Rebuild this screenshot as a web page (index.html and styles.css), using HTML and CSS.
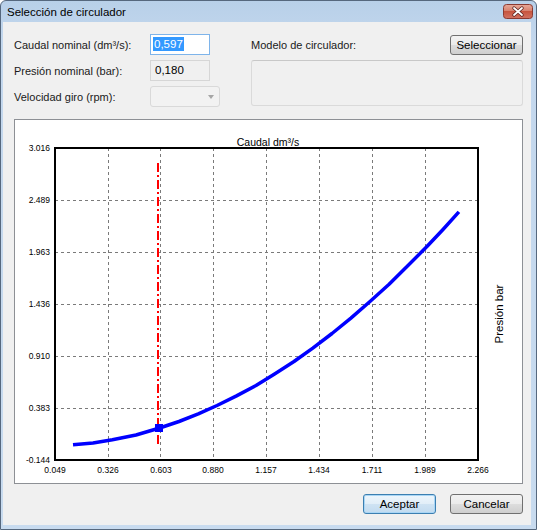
FILE: index.html
```html
<!doctype html>
<html lang="es">
<head>
	<meta charset="utf-8" />
	<title>
		Selección de circulador
	</title>

	<link rel="stylesheet" href="styles.css">
</head>
<body>

	<!-- BEGIN: Window. -->
	<section class="window">
		<header class="window__title-bar">

			<span class="window__title">Selección de circulador</span>

			<button class="window__close" type="button" aria-label="Cerrar">
				<svg width="30" height="15" viewBox="0 0 30 15">
					<defs>
						<linearGradient id="close-fill" x1="0" y1="0" x2="0" y2="1">
							<stop offset="0" stop-color="#e8a99a" />
							<stop offset="0.45" stop-color="#d7826f" />
							<stop offset="0.5" stop-color="#c7553f" />
							<stop offset="1" stop-color="#d27262" />
						</linearGradient>
					</defs>
					<rect x="0.5" y="0.5" width="29" height="14" rx="3" fill="url(#close-fill)" stroke="#8a3a32" />
					<path d="M11 4 L19 11 M19 4 L11 11" stroke="#5a2320" stroke-width="3.4" stroke-linecap="round" />
					<path d="M11 4 L19 11 M19 4 L11 11" stroke="#ffffff" stroke-width="1.8" stroke-linecap="round" />
				</svg>
			</button>

		</header>

		<div class="window__client">

			<!-- BEGIN: Form. -->
			<div class="form">
				<div class="form__left">

					<label class="form__label">Caudal nominal (dm³/s):</label>
					<div class="field field--focused">
						<span class="field__selection">0,597</span>
					</div>

					<label class="form__label">Presión nominal (bar):</label>
					<div class="field field--readonly">0,180</div>

					<label class="form__label">Velocidad giro (rpm):</label>
					<div class="combo">
						<span class="combo__arrow"></span>
					</div>

				</div>
				<div class="form__right">

					<div class="form__model-row">
						<span class="form__label">Modelo de circulador:</span>
						<button class="button" type="button">Seleccionar</button>
					</div>

					<div class="model-box"></div>

				</div>
			</div>
			<!-- END: Form. -->

			<!-- BEGIN: Chart. -->
			<div class="chart">
				<svg class="chart__svg" width="507" height="363" viewBox="15 120 507 363">

					<text class="chart__title" x="268" y="146">Caudal dm³/s</text>

					<g class="chart__grid">
						<line x1="108.5" y1="148" x2="108.5" y2="460" />
						<line x1="160.5" y1="148" x2="160.5" y2="460" />
						<line x1="213.5" y1="148" x2="213.5" y2="460" />
						<line x1="266.5" y1="148" x2="266.5" y2="460" />
						<line x1="319.5" y1="148" x2="319.5" y2="460" />
						<line x1="372.5" y1="148" x2="372.5" y2="460" />
						<line x1="425.5" y1="148" x2="425.5" y2="460" />
						<line x1="55" y1="200.5" x2="478" y2="200.5" />
						<line x1="55" y1="252.5" x2="478" y2="252.5" />
						<line x1="55" y1="304.5" x2="478" y2="304.5" />
						<line x1="55" y1="356.5" x2="478" y2="356.5" />
						<line x1="55" y1="408.5" x2="478" y2="408.5" />
					</g>

					<rect class="chart__frame" x="55" y="148" width="423" height="312" />

					<g class="chart__y-labels">
						<text x="50" y="151">3.016</text>
						<text x="50" y="203">2.489</text>
						<text x="50" y="255">1.963</text>
						<text x="50" y="307">1.436</text>
						<text x="50" y="359">0.910</text>
						<text x="50" y="411">0.383</text>
						<text x="50" y="463">-0.144</text>
					</g>

					<g class="chart__x-labels">
						<text x="55" y="473">0.049</text>
						<text x="108" y="473">0.326</text>
						<text x="161" y="473">0.603</text>
						<text x="213" y="473">0.880</text>
						<text x="266" y="473">1.157</text>
						<text x="319" y="473">1.434</text>
						<text x="372" y="473">1.711</text>
						<text x="425" y="473">1.989</text>
						<text x="478" y="473">2.266</text>
					</g>

					<line class="chart__marker-line" x1="158" y1="163" x2="158" y2="447" />

					<polyline class="chart__curve" points="73,444.8 93,443 112.4,439.7 136,435 159.6,428 179,421.5 198.3,413.9 217,405.5 236.5,395.9 256,385.5 274.6,374 294,361.5 312.8,348.1 332,333.5 350.9,318.1 370,301.5 389.1,284.2 408,265.5 427.2,246.3 443,229.5 458.9,211.9" />

					<rect class="chart__point" x="155" y="424" width="8" height="8" />

					<text class="chart__axis-name" x="499" y="314" transform="rotate( -90 499 314 )">Presión bar</text>

				</svg>
			</div>
			<!-- END: Chart. -->

			<div class="actions">
				<button class="button button--default" type="button">Aceptar</button>
				<button class="button" type="button">Cancelar</button>
			</div>

		</div>
	</section>
	<!-- END: Window. -->

</body>
</html>
```

FILE: styles.css
```css
html {
	box-sizing: border-box ;
}

*, *:before, *:after {
	box-sizing: inherit ;
}

body {
	color: #000000 ;
	font-family: "Liberation Sans", Arial, sans-serif ;
	font-size: 11px ;
	margin: 0px 0px 0px 0px ;
}

button {
	font-family: inherit ;
	font-size: inherit ;
}

/* BEGIN: Window frame. */
.window {
	background: linear-gradient( #b8d0e9, #c3d7ed 40px, #c8dbef ) ;
	border: 1px solid #56687e ;
	border-radius: 6px 6px 0px 0px ;
	display: flex ;
	flex-direction: column ;
	height: 530px ;
	width: 537px ;
}

.window__title-bar {
	align-items: flex-start ;
	display: flex ;
	flex: 0 0 auto ;
	height: 21px ;
	padding: 0px 3px 0px 6px ;
}

.window__title {
	align-self: center ;
	color: #000000 ;
	font-size: 11.5px ;
}

.window__close {
	background: none ;
	border: 0px ;
	height: 15px ;
	margin: 3px 0px 0px auto ;
	padding: 0px 0px 0px 0px ;
	width: 30px ;
}

.window__close svg {
	display: block ;
}

.window__client {
	background-color: #f0f0f0 ;
	display: flex ;
	flex: 1 1 auto ;
	flex-direction: column ;
	margin: 0px 5px 4px 2px ;
	padding: 12px 8px 11px 11px ;
}
/* END: Window frame. */

/* BEGIN: Form. */
.form {
	display: flex ;
	gap: 31px ;
}

.form__left {
	align-items: center ;
	display: grid ;
	grid-auto-rows: 21px ;
	grid-template-columns: 136px 70px ;
	row-gap: 5px ;
}

.form__label {
	color: #1a1a1a ;
}

.form__right {
	display: flex ;
	flex: 1 1 auto ;
	flex-direction: column ;
}

.form__model-row {
	align-items: center ;
	display: flex ;
	height: 21px ;
	justify-content: space-between ;
}

.field {
	background-color: #ffffff ;
	border: 1px solid #abadb3 ;
	font-size: 11.5px ;
	height: 21px ;
	line-height: 19px ;
	padding: 0px 2px 0px 2px ;
	width: 60px ;
}

.field--focused {
	border-color: #7eb4ea ;
}

.field--readonly {
	background-color: #f0f0f0 ;
	border-color: #d6d6d6 ;
	padding-left: 4px ;
}

.field__selection {
	background-color: #3399ff ;
	color: #ffffff ;
	padding: 1px 1px 1px 1px ;
}

.combo {
	align-items: center ;
	background-color: #f2f2f2 ;
	border: 1px solid #d9d9d9 ;
	border-radius: 3px ;
	display: flex ;
	height: 21px ;
	justify-content: flex-end ;
	padding-right: 5px ;
	width: 70px ;
}

.combo__arrow {
	border-left: 3.5px solid transparent ;
	border-right: 3.5px solid transparent ;
	border-top: 4px solid #a6a6a6 ;
	height: 0px ;
	width: 0px ;
}

.model-box {
	border: 1px solid #dadada ;
	border-radius: 3px ;
	border-top-color: #c8c8c8 ;
	height: 46px ;
	margin-top: 5px ;
}
/* END: Form. */

/* BEGIN: Chart. */
.chart {
	background-color: #ffffff ;
	border: 1px solid #8d9095 ;
	flex: 0 0 auto ;
	height: 365px ;
	margin-top: 12px ;
}

.chart__svg {
	display: block ;
	font-family: "Liberation Sans", Arial, sans-serif ;
}

.chart__title {
	font-size: 10.5px ;
	text-anchor: middle ;
}

.chart__grid line {
	shape-rendering: crispEdges ;
	stroke: #7a7a7a ;
	stroke-dasharray: 3 3 ;
	stroke-width: 1 ;
}

.chart__frame {
	fill: none ;
	shape-rendering: crispEdges ;
	stroke: #000000 ;
	stroke-width: 2 ;
}

.chart__y-labels text {
	font-size: 8.5px ;
	text-anchor: end ;
}

.chart__x-labels text {
	font-size: 8.5px ;
	text-anchor: middle ;
}

.chart__marker-line {
	shape-rendering: crispEdges ;
	stroke: #ff0000 ;
	stroke-dasharray: 9 3 2 3 ;
	stroke-width: 2 ;
}

.chart__curve {
	fill: none ;
	stroke: #0000ff ;
	stroke-linejoin: round ;
	stroke-width: 3.5 ;
}

.chart__point {
	fill: #0000ff ;
}

.chart__axis-name {
	dominant-baseline: central ;
	font-size: 11.5px ;
	text-anchor: middle ;
}
/* END: Chart. */

/* BEGIN: Buttons. */
.actions {
	display: flex ;
	gap: 14px ;
	justify-content: flex-end ;
	margin-top: 10px ;
}

.button {
	background: linear-gradient( #f2f2f2, #ebebeb 50%, #dddddd 50%, #cfcfcf ) ;
	border: 1px solid #707070 ;
	border-radius: 3px ;
	color: #000000 ;
	font-size: 11.5px ;
	height: 20px ;
	padding: 0px 0px 0px 0px ;
	width: 73px ;
}

.button--default {
	background: linear-gradient( #eef6fc, #e1eef8 50%, #cfe3f3 50%, #c2dbf0 ) ;
	border-color: #3c7fb1 ;
	box-shadow: inset 0px 0px 0px 1px #a9d6f5 ;
}
/* END: Buttons. */
```
